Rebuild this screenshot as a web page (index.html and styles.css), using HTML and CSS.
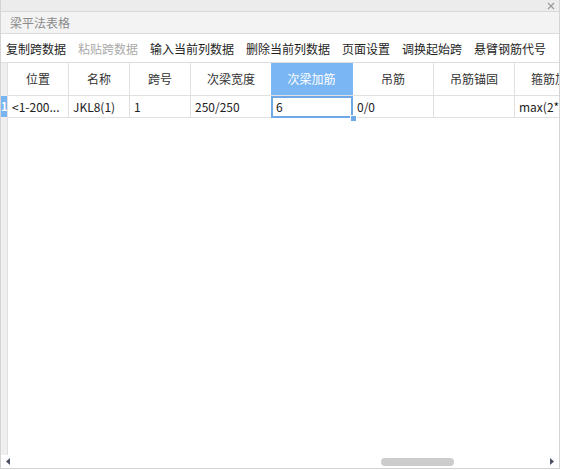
FILE: index.html
```html
<!DOCTYPE html>
<html lang="zh-CN">
<head>
<meta charset="utf-8">
<title>梁平法表格</title>
<link rel="stylesheet" href="styles.css">
</head>
<body>
<div class="app">
  <div class="topstrip">
    <svg class="close" width="8" height="8" viewBox="0 0 8 8"><path d="M1 1L7 7M7 1L1 7" stroke="#9a9a9a" stroke-width="1.2" fill="none"/></svg>
  </div>
  <div class="titlebar">梁平法表格</div>
  <div class="toolbar">
    <span class="tool">复制跨数据</span>
    <span class="tool disabled">粘贴跨数据</span>
    <span class="tool">输入当前列数据</span>
    <span class="tool">删除当前列数据</span>
    <span class="tool">页面设置</span>
    <span class="tool">调换起始跨</span>
    <span class="tool">悬臂钢筋代号</span>
  </div>
  <div class="main">
    <div class="gutter">
      <div class="g-head"></div>
      <div class="g-row">1</div>
    </div>
    <div class="grid">
      <div class="row head">
        <div class="cell w60">位置</div>
        <div class="cell w61">名称</div>
        <div class="cell w61">跨号</div>
        <div class="cell w81">次梁宽度</div>
        <div class="cell w81 sel">次梁加筋</div>
        <div class="cell w81">吊筋</div>
        <div class="cell w81">吊筋锚固</div>
        <div class="cell w81">箍筋加密</div>
      </div>
      <div class="row data">
        <div class="cell w60">&lt;1-200...</div>
        <div class="cell w61">JKL8(1)</div>
        <div class="cell w61">1</div>
        <div class="cell w81">250/250</div>
        <div class="cell w81 active">6<span class="selbox"></span><span class="handle"></span></div>
        <div class="cell w81">0/0</div>
        <div class="cell w81"></div>
        <div class="cell w81">max(2*hb,500)</div>
      </div>
    </div>
  </div>
  <div class="hscroll">
    <svg class="arrow" width="4" height="7" viewBox="0 0 4 7"><path d="M4 0L0 3.5L4 7Z" fill="#4a5063"/></svg>
    <div class="track"><div class="thumb"></div></div>
    <svg class="arrow" width="4" height="7" viewBox="0 0 4 7"><path d="M0 0L4 3.5L0 7Z" fill="#4a5063"/></svg>
  </div>
</div>
</body>
</html>
```
FILE: styles.css
```css
html, body {
  margin: 0;
  padding: 0;
  background: #ffffff;
}
body {
  width: 561px;
  height: 470px;
  overflow: hidden;
  font-family: "Noto Sans CJK SC", "Open Sans", sans-serif;
  font-size: 12px;
  color: #222;
}
.app {
  width: 560px;
  height: 469px;
  box-sizing: border-box;
  border-left: 1px solid #d4d4d4;
  border-right: 1px solid #d4d4d4;
  border-bottom: 1px solid #d4d4d4;
  display: flex;
  flex-direction: column;
}
.topstrip {
  height: 11px;
  background: #ececec;
  border-bottom: 1px solid #d8d8d8;
  display: flex;
  justify-content: flex-end;
  align-items: center;
  padding-right: 4px;
  flex: none;
}
.close {
  display: block;
  margin-top: 1px;
}
.titlebar {
  height: 21px;
  line-height: 21px;
  background: #f3f3f3;
  border-bottom: 1px solid #dcdcdc;
  color: #8a8a8a;
  padding-left: 9px;
  flex: none;
  font-size: 12px;
}
.toolbar {
  height: 28px;
  border-bottom: 1px solid #dedede;
  display: flex;
  align-items: center;
  gap: 12px;
  padding-left: 5px;
  flex: none;
  background: #fff;
}
.tool {
  color: #1e1e1e;
  white-space: nowrap;
}
.tool.disabled {
  color: #aaaaaa;
}
.main {
  flex: 1;
  display: flex;
  min-height: 0;
}
.gutter {
  width: 6px;
  background: #efefef;
  border-right: 1px solid #e0e0e0;
  flex: none;
  display: flex;
  flex-direction: column;
}
.g-head {
  height: 33px;
}
.g-row {
  height: 21px;
  background: #78b4ef;
  color: #fff;
  font-weight: bold;
  font-size: 11px;
  line-height: 21px;
  text-align: center;
  overflow: hidden;
}
.grid {
  flex: 1;
  overflow: hidden;
  background: #fff;
}
.row {
  display: flex;
  border-bottom: 1px solid #e0e0e0;
  white-space: nowrap;
}
.cell {
  flex: none;
  box-sizing: border-box;
  border-right: 1px solid #e0e0e0;
  overflow: hidden;
}
.w60 { width: 61px; }
.w61 { width: 61px; }
.w81 { width: 81px; }
.head .cell {
  height: 32px;
  line-height: 32px;
  text-align: center;
  color: #333;
}
.head .cell.sel {
  background: #7ab6f3;
  color: #fff;
  border-right-color: #7ab6f3;
  margin-left: -1px;
  width: 82px;
}
.data .cell {
  height: 21px;
  line-height: 21px;
  padding-left: 4px;
  color: #222;
}
.data .cell.active {
  position: relative;
  overflow: visible;
}
.selbox {
  position: absolute;
  left: -1px;
  top: 0;
  width: 82px;
  height: 22px;
  box-sizing: border-box;
  border: 2px solid #6ea8e6;
}
.handle {
  position: absolute;
  left: 78px;
  top: 19px;
  width: 5px;
  height: 5px;
  background: #6ea8e6;
  border: 1px solid #fff;
}
.hscroll {
  height: 13px;
  flex: none;
  display: flex;
  align-items: center;
  padding: 0 5px;
  gap: 0;
  background: #fff;
}
.arrow {
  display: block;
  flex: none;
}
.track {
  flex: 1;
  height: 13px;
  display: flex;
  align-items: center;
  padding-left: 371px;
}
.thumb {
  width: 73px;
  height: 8px;
  border-radius: 4px;
  background: #cccccc;
}
```
